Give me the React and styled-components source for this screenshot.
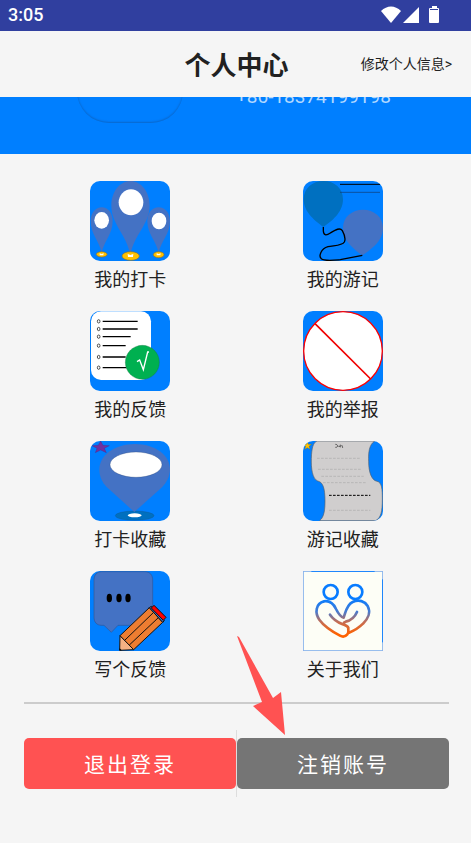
import React from "react";
import styled, { createGlobalStyle } from "styled-components";

const PinIcon = () => (
  <svg viewBox="0 0 240 240">
    <g fill="#4472c4">
      <path d="M35 215C28 180 2 160 2 120C2 96 17 79 35 79C54 79 68 96 68 120C68 160 42 180 35 215Z" />
      <path d="M206 215C199 180 172 160 172 120C172 96 187 79 206 79C225 79 240 96 240 120C240 160 213 180 206 215Z" />
      <path d="M121 222C110 160 64 130 64 74C64 32 90 0 121 0C153 0 179 32 179 74C179 130 132 160 121 222Z" />
    </g>
    <g fill="#ffc000" stroke="#8a7432" strokeWidth="2">
      <ellipse cx="35" cy="220" rx="16" ry="8" />
      <ellipse cx="122" cy="225" rx="26" ry="13" />
      <ellipse cx="206" cy="221" rx="16" ry="9" />
    </g>
    <g fill="#fff">
      <ellipse cx="35" cy="118" rx="22" ry="25" />
      <ellipse cx="123" cy="64" rx="37" ry="39" />
      <ellipse cx="207" cy="120" rx="22" ry="25" />
      <path d="M29 217L35 219L41 217L40 223H29Z" />
      <path d="M113 219L121 222L130 219L129 228H114Z" />
      <path d="M200 217L206 219L212 217L211 223H200Z" />
    </g>
  </svg>
);

const BalloonIcon = () => (
  <svg viewBox="0 0 240 240">
    <path
      fill="#0070c0"
      d="M61 138C40 122 2 96 2 55C2 22 28 0 61 0C95 0 120 22 120 55C120 96 84 122 61 138Z"
    />
    <path
      fill="#4472c4"
      d="M178 223C156 206 120 182 120 140C120 108 147 86 180 86C213 86 240 108 240 140C240 182 202 206 178 223Z"
    />
    <path stroke="#000" strokeWidth="3" d="M111 10H231" />
    <path stroke="#123a6b" strokeWidth="2" d="M111 34H231" />
    <path
      fill="none"
      stroke="#000"
      strokeWidth="4"
      d="M61 138V150C62 166 72 163 82 156C97 147 111 138 118 149C124 160 128 175 124 183C117 195 90 193 75 197C54 203 46 226 55 233C64 241 90 238 112 236L178 223"
    />
  </svg>
);

const ListIcon = () => (
  <svg viewBox="0 0 240 240">
    <rect x="3" y="1" width="180" height="206" rx="30" fill="#fff" />
    <g fill="none" stroke="#000" strokeWidth="2">
      {[31, 54, 77, 104, 138, 170].map((y) => (
        <ellipse key={y} cx="26" cy={y} rx="4" ry="5" />
      ))}
    </g>
    <path
      stroke="#000"
      strokeWidth="4"
      d="M38 31H143M38 54H143M38 77H122M38 104H107M38 138H107M38 170H110"
    />
    <circle cx="157" cy="154" r="51" fill="#00b050" stroke="#1d6f42" />
    <path
      fill="none"
      stroke="#fff"
      strokeWidth="4"
      d="M141 152L149 147L160 176L173 123H177"
    />
  </svg>
);

const BanIcon = () => (
  <svg viewBox="0 0 240 240">
    <circle cx="120" cy="120" r="118" fill="#fff" stroke="#f00" strokeWidth="4" />
    <path stroke="#f00000" strokeWidth="5" d="M36 38L203 204" />
  </svg>
);

const PinStarIcon = () => (
  <svg viewBox="0 0 240 240">
    <ellipse cx="134" cy="224" rx="58" ry="14" fill="#0070c0" stroke="#17588f" />
    <path
      fill="#4472c4"
      d="M133 213L50 138C36 124 28 106 28 85C28 42 76 9 135 9C194 9 240 42 240 85C240 106 230 124 217 138Z"
    />
    <ellipse cx="138" cy="71" rx="78" ry="38" fill="#fff" stroke="#2b4675" />
    <ellipse cx="134" cy="223" rx="21" ry="6" fill="#fff" />
    <path
      fill="#7030a0"
      stroke="#4a2a80"
      d="M32 0L39 13L58 14L43 22L49 35L32 27L16 35L21 22L6 14L25 13Z"
    />
  </svg>
);

const ScrollIcon = () => (
  <svg viewBox="0 0 240 240">
    <path
      fill="#d0cece"
      stroke="#54606e"
      strokeWidth="2"
      d="M42 0H215C198 12 196 34 197 62C197 94 206 118 222 121C237 124 238 145 238 174C238 212 234 230 218 239H50C64 228 66 204 66 180C66 142 60 123 44 120C28 113 24 82 25 52C26 22 30 5 42 0Z"
    />
    <g fill="none" stroke="#aaa" strokeWidth="2" strokeDasharray="8 4">
      <path d="M42 52H170M45 85H176M55 106H182M60 125H190M78 208H202" />
      <path stroke="#000" strokeWidth="3" d="M78 163H202" />
    </g>
    <path
      fill="none"
      stroke="#222"
      strokeWidth="2"
      d="M97 10C106 10 106 20 97 19M106 16H111M112 11V19M116 12L119 19L117 21"
    />
    <path
      fill="#ffc000"
      stroke="#6a6a35"
      d="M13 1L16 10L26 10L18 16L21 25L13 20L5 25L8 16L0 10L10 10Z"
    />
  </svg>
);

const PencilIcon = () => (
  <svg viewBox="0 0 240 240">
    <path
      fill="#4472c4"
      stroke="#315799"
      strokeWidth="2"
      d="M36 2H164C180 2 188 12 188 27V138C188 154 180 163 164 163H84L64 184L42 163H36C20 163 12 154 12 138V27C12 12 20 2 36 2Z"
    />
    <ellipse cx="58" cy="81" rx="8" ry="13" />
    <ellipse cx="87" cy="81" rx="8" ry="13" />
    <ellipse cx="114" cy="81" rx="8" ry="13" />
    <g stroke="#111" strokeWidth="3" strokeLinejoin="round">
      <path fill="#f4b183" d="M90 194L131 236L89 238Z" />
      <path fill="#ed7d31" d="M178 110L218 154L131 236L90 194Z" />
      <path fill="none" d="M191 124L104 208M205 140L118 222" />
      <path fill="#4472c4" d="M178 110L184 106L223 149L218 154Z" />
      <path fill="#f00" d="M192 103L228 139L220 148L184 111Z" />
    </g>
    <path d="M89 232L95 238H88Z" />
  </svg>
);

const HeartHandsIcon = () => (
  <svg viewBox="0 0 240 240">
    <defs>
      <linearGradient id="hands" gradientUnits="userSpaceOnUse" x1="0" y1="85" x2="0" y2="190">
        <stop offset="0" stopColor="#087cff" />
        <stop offset="0.35" stopColor="#477bd0" />
        <stop offset="0.65" stopColor="#c66d52" />
        <stop offset="1" stopColor="#ff6200" />
      </linearGradient>
    </defs>
    <rect x="1" y="1" width="238" height="238" fill="#fdfef6" stroke="#8fb2e8" strokeWidth="2" />
    <path stroke="#087cff" strokeWidth="3" d="M25 1H215M239 25V214" />
    <g fill="none" stroke="#087cff" strokeWidth="8">
      <circle cx="83" cy="63" r="21" />
      <circle cx="157" cy="63" r="21" />
    </g>
    <path
      fill="none"
      stroke="url(#hands)"
      strokeWidth="8"
      strokeLinecap="round"
      strokeLinejoin="round"
      d="M81 131C91 146 105 154 119 160C128 164 138 165 136 174C135 180 139 183 133 190C127 197 120 199 111 194C87 181 62 164 49 146C35 126 38 97 63 91C83 88 92 99 99 114C105 126 112 138 122 140C127 126 130 102 149 93C168 84 185 91 194 105C204 124 195 144 180 158C167 171 154 179 138 185M162 123C154 142 141 149 128 152C121 154 120 160 128 163"
    />
  </svg>
);

const menus = [
  { id: 1, text: "我的打卡", icon: <PinIcon /> },
  { id: 2, text: "我的游记", icon: <BalloonIcon /> },
  { id: 3, text: "我的反馈", icon: <ListIcon /> },
  { id: 4, text: "我的举报", icon: <BanIcon /> },
  { id: 5, text: "打卡收藏", icon: <PinStarIcon /> },
  { id: 6, text: "游记收藏", icon: <ScrollIcon /> },
  { id: 7, text: "写个反馈", icon: <PencilIcon /> },
  { id: 8, text: "关于我们", icon: <HeartHandsIcon />, square: true },
];

const App = () => {
  return (
    <>
      <GlobalStyle />
      <StatusBar>
        <span>3:05</span>
        <StatusIcons viewBox="0 0 60 18">
          <path d="M0 5C6 -1 14 -1 20 5L10 17Z" />
          <path d="M38 1V17H22Z" />
          <path d="M51 0H56V2H57Q58 2 58 3V16Q58 17 57 17H49Q48 17 48 16V3Q48 2 49 2H51Z" />
          <path fill="#303f9f" d="M49 3H57V4H49Z" />
        </StatusIcons>
      </StatusBar>

      <Header>
        <Title>个人中心</Title>
        <EditLink href="#edit">修改个人信息&gt;</EditLink>
      </Header>

      <Banner>
        <Avatar />
        <Phone>+86-18374199198</Phone>
      </Banner>

      <Content>
        <MenuGrid>
          {menus.map((menu) => (
            <MenuItem key={menu.id} type="button">
              <MenuIcon $square={menu.square}>{menu.icon}</MenuIcon>
              <span>{menu.text}</span>
            </MenuItem>
          ))}
        </MenuGrid>

        <Divider />

        <Actions>
          <ActionButton type="button" $color="#ff5252">
            退出登录
          </ActionButton>
          <Separator />
          <ActionButton type="button" $color="#757575">
            注销账号
          </ActionButton>
          <Arrow viewBox="0 0 48 100">
            <path d="M0 0L2 1L36 62L44 56L48 99L16 70L25 66Z" />
          </Arrow>
        </Actions>
      </Content>
    </>
  );
};

export default App;

const GlobalStyle = createGlobalStyle`
  * {
    box-sizing: border-box;
  }

  body {
    margin: 0;
    background: #f5f5f5;
    color: #212121;
    font-family: Roboto, "Noto Sans CJK SC", sans-serif;
  }

  button {
    border: none;
    padding: 0;
    font-family: inherit;
    cursor: pointer;
  }
`;

const StatusBar = styled.div`
  display: flex;
  align-items: center;
  justify-content: space-between;
  height: 31px;
  padding: 0 30px 2px 8px;
  background: #303f9f;
  color: #fff;
  font-size: 18px;
  font-weight: 500;
  line-height: 28px;
`;

const StatusIcons = styled.svg`
  width: 60px;
  height: 18px;
  fill: #fff;
`;

const Header = styled.header`
  display: grid;
  grid-template-columns: 1fr auto 1fr;
  align-items: center;
  height: 66px;
  padding: 0 19px 2px 21px;
`;

const Title = styled.h1`
  grid-column: 2;
  margin: 0;
  font-size: 26px;
  font-weight: 700;
`;

const EditLink = styled.a`
  justify-self: end;
  color: inherit;
  font-size: 14px;
  text-decoration: none;
`;

const Banner = styled.section`
  display: flex;
  align-items: flex-end;
  gap: 53px;
  height: 57px;
  padding: 0 24px 31px 77px;
  overflow: hidden;
  background: #007fff;
`;

const Avatar = styled.div`
  flex: none;
  width: 106px;
  height: 106px;
  border-radius: 32px;
  box-shadow: inset 0 -1px 2px #0a66c8;
`;

const Phone = styled.span`
  margin-bottom: 14px;
  color: #b3d9ff;
  font-size: 19px;
  line-height: 24px;
`;

const Content = styled.main`
  padding: 27px 22px 24px 24px;
`;

const MenuGrid = styled.div`
  display: grid;
  grid-template-columns: 1fr 1fr;
  row-gap: 18px;
`;

const MenuItem = styled.button`
  display: flex;
  flex-direction: column;
  align-items: center;
  gap: 6px;
  background: none;
  color: inherit;
  font-size: 18px;
  line-height: 26px;
`;

const MenuIcon = styled.div`
  width: 80px;
  height: 80px;
  border-radius: ${({ $square }) => ($square ? "0" : "10px")};
  overflow: hidden;
  background: #007fff;

  svg {
    display: block;
    width: 100%;
    height: 100%;
  }
`;

const Divider = styled.hr`
  height: 2px;
  margin: 19px 0 26px;
  border: none;
  background: #ccc;
`;

const Actions = styled.div`
  position: relative;
  display: flex;
  align-items: center;
  height: 67px;
`;

const ActionButton = styled.button`
  flex: 1;
  height: 51px;
  padding-bottom: 2px;
  border-radius: 5px;
  background: ${({ $color }) => $color};
  color: #fff;
  font-size: 21px;
  letter-spacing: 2px;
`;

const Separator = styled.div`
  width: 1px;
  height: 100%;
  background: #ddd;
`;

const Arrow = styled.svg`
  position: absolute;
  right: 50%;
  bottom: 61px;
  width: 48px;
  height: 100px;
  margin-right: -48px;
  fill: #ff5252;
  pointer-events: none;
`;
